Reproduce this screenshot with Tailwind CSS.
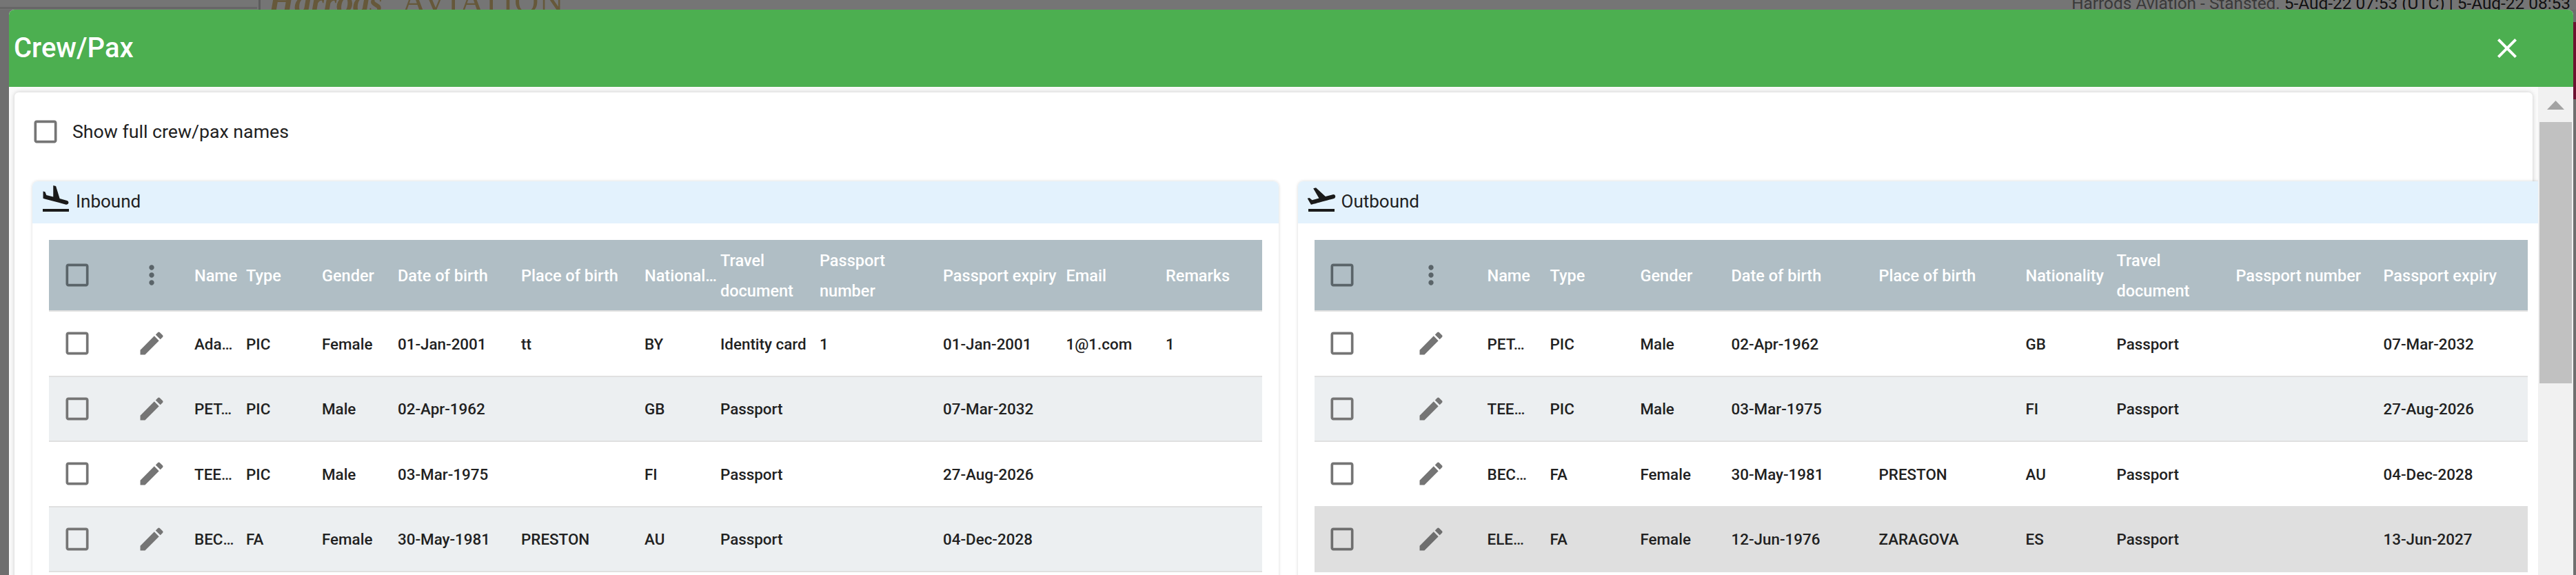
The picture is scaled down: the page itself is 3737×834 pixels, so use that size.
<!DOCTYPE html>
<html lang="en">
<head>
    <meta charset="UTF-8">
    <meta name="viewport" content="width=device-width, initial-scale=1.0">
    <title>Crew/Pax</title>
    <script src="https://cdn.jsdelivr.net/npm/@tailwindcss/browser@4"></script>
</head>
<body class="relative h-[834px] w-[3737px] overflow-hidden bg-[#6e6e6e] font-['Roboto',sans-serif] text-[#212121]">

    <!-- Icons -->
    <svg class="hidden">
        <symbol id="ic-check" viewBox="0 0 24 24"><path d="M19 5v14H5V5h14m0-2H5c-1.1 0-2 .9-2 2v14c0 1.1.9 2 2 2h14c1.1 0 2-.9 2-2V5c0-1.1-.9-2-2-2z"/></symbol>
        <symbol id="ic-edit" viewBox="0 0 24 24"><path d="M3 17.25V21h3.75L17.81 9.94l-3.75-3.75L3 17.25zM20.71 7.04c.39-.39.39-1.02 0-1.41l-2.34-2.34c-.39-.39-1.02-.39-1.41 0l-1.83 1.83 3.75 3.75 1.83-1.83z"/></symbol>
        <symbol id="ic-more" viewBox="0 0 24 24"><path d="M12 8c1.1 0 2-.9 2-2s-.9-2-2-2-2 .9-2 2 .9 2 2 2zm0 2c-1.1 0-2 .9-2 2s.9 2 2 2 2-.9 2-2-.9-2-2-2zm0 6c-1.1 0-2 .9-2 2s.9 2 2 2 2-.9 2-2-.9-2-2-2z"/></symbol>
    </svg>

    <!-- Page behind the dialog -->
    <div class="absolute inset-x-0 top-0 h-[14px] overflow-hidden bg-[#757575]">
        <div class="absolute left-0 top-[10px] h-[3px] w-[373px] bg-[#666666]"></div>
        <div class="absolute left-[375px] top-0 h-[14px] w-[3px] bg-[#5c5c5c]"></div>
        <div class="absolute left-[389px] top-[-28px] whitespace-nowrap font-['Liberation_Serif',serif] text-[50px] italic font-bold leading-[60px] tracking-[-1px] text-[#66583a]">Harrods</div>
        <div class="absolute left-[583px] top-[-28px] whitespace-nowrap font-['Liberation_Serif',serif] text-[49px] leading-[60px] tracking-[1px] text-[#66583a]">AVIATION</div>
        <div class="absolute right-[8px] top-[-10px] whitespace-nowrap text-[24.4px] leading-[30px] text-[#111111]"><span class="text-[#3a3a3a]">Harrods Aviation - Stansted.</span> 5-Aug-22 07:53 (UTC) | 5-Aug-22 08:53</div>
    </div>
    <div class="absolute right-0 top-[32px] h-[112px] w-[4px] bg-[#6d1231]"></div>
    <div class="absolute right-0 top-[144px] h-[690px] w-[4px] bg-[#6f6f6f]"></div>

    <!-- Dialog -->
    <div class="absolute left-[13px] top-[14px] flex h-[820px] w-[3720px] flex-col overflow-hidden rounded-t-lg bg-[#fafafa]">
        <div class="flex h-[112px] shrink-0 items-center justify-between bg-[#4caf50] pl-[7px] pr-[72px] text-white">
            <h2 class="text-[40px] font-medium leading-none">Crew/Pax</h2>
            <svg class="h-12 w-12 fill-white" viewBox="0 0 24 24"><path d="M19 6.41L17.59 5 12 10.59 6.41 5 5 6.41 10.59 12 5 17.59 6.41 19 12 13.41 17.59 19 19 17.59 13.41 12z"/></svg>
        </div>

        <div class="flex min-h-0 flex-1">
            <!-- Scrolling content -->
            <div class="min-w-0 flex-1 overflow-hidden pl-2 pt-2">
                <div class="h-[800px] w-[3653px] rounded-md bg-white pl-[26px] pt-[34.5px] shadow-[0_0_6px_rgba(0,0,0,0.2)]">
                    <label class="ml-[-3.5px] flex items-center gap-[17.5px] text-[26.7px] leading-[44px]">
                        <svg class="h-11 w-11 fill-[#757575]"><use href="#ic-check"/></svg>
                        <span>Show full crew/pax names</span>
                    </label>

                    <div class="mt-[50.5px] flex gap-[27.5px]">
                        <!-- Inbound -->
                        <section class="w-[1808px] shrink-0 rounded-t-lg bg-white shadow-[0_0_4px_rgba(0,0,0,0.16)]">
                            <div class="flex h-[61px] gap-[5px] overflow-hidden rounded-t-lg bg-[#e3f2fd] pl-[10px] pt-[2px] text-[26px]">
                                <svg class="h-12 w-12 fill-[#1a1a1a]" viewBox="0 0 24 24"><path d="M2.5 19h19v2h-19zm7.18-5.73l4.35 1.16 5.31 1.42c.8.21 1.62-.26 1.84-1.06.21-.8-.26-1.62-1.06-1.84l-5.31-1.42-2.76-9.02L10.12 2v8.28L5.15 8.95l-.93-2.32-1.45-.39v5.17l1.6.43 5.31 1.43z"/></svg>
                                <span class="leading-[54px]">Inbound</span>
                            </div>
                            <div class="p-6">
                                <table class="w-[1760px] table-fixed text-left text-[22.4px] font-medium">
                                    <colgroup>
                                        <col class="w-[81px]"><col class="w-[130px]"><col class="w-[75px]"><col class="w-[110px]"><col class="w-[110px]"><col class="w-[179px]"><col class="w-[179px]"><col class="w-[110px]"><col class="w-[144px]"><col class="w-[179px]"><col class="w-[178.5px]"><col class="w-[144.5px]"><col class="w-[140px]">
                                    </colgroup>
                                    <thead class="text-[23.5px]">
                                        <tr class="h-[103px] border-b-2 border-[#e0e0e0] bg-[#b0bec5] text-white">
                                            <th class="font-medium"><svg class="mx-auto block h-11 w-11 fill-[#5a6469]"><use href="#ic-check"/></svg></th>
                                            <th class="pl-[46px] font-medium"><svg class="block h-11 w-11 fill-[#5a6469]"><use href="#ic-more"/></svg></th>
                                            <th class="pt-[3px] font-medium">Name</th>
                                            <th class="pt-[3px] font-medium">Type</th>
                                            <th class="pt-[3px] font-medium">Gender</th>
                                            <th class="pt-[3px] font-medium">Date of birth</th>
                                            <th class="pt-[3px] font-medium">Place of birth</th>
                                            <th class="whitespace-nowrap pt-[3px] font-medium">National…</th>
                                            <th class="pt-[1px] font-medium leading-[44px]">Travel<br>document</th>
                                            <th class="pt-[1px] font-medium leading-[44px]">Passport<br>number</th>
                                            <th class="pt-[3px] font-medium">Passport expiry</th>
                                            <th class="pt-[3px] font-medium">Email</th>
                                            <th class="pt-[3px] font-medium">Remarks</th>
                                        </tr>
                                    </thead>
                                    <tbody>
                                        <tr class="h-[94.5px] border-b-2 border-[#e0e0e0] bg-white">
                                            <td><svg class="mx-auto block h-11 w-11 fill-[#757575]"><use href="#ic-check"/></svg></td>
                                            <td class="pl-[46px]"><svg class="block h-11 w-11 fill-[#757575]"><use href="#ic-edit"/></svg></td>
                                            <td class="pt-[3px]">Ada…</td><td class="pt-[3px]">PIC</td><td class="pt-[3px]">Female</td><td class="pt-[3px]">01-Jan-2001</td><td class="pt-[3px]">tt</td><td class="pt-[3px]">BY</td><td class="pt-[3px]">Identity card</td><td class="pt-[3px]">1</td><td class="pt-[3px]">01-Jan-2001</td><td class="pt-[3px]">1@1.com</td><td class="pt-[3px]">1</td>
                                        </tr>
                                        <tr class="h-[94.5px] border-b-2 border-[#e0e0e0] bg-[#eceff1]">
                                            <td><svg class="mx-auto block h-11 w-11 fill-[#757575]"><use href="#ic-check"/></svg></td>
                                            <td class="pl-[46px]"><svg class="block h-11 w-11 fill-[#757575]"><use href="#ic-edit"/></svg></td>
                                            <td class="pt-[3px]">PET…</td><td class="pt-[3px]">PIC</td><td class="pt-[3px]">Male</td><td class="pt-[3px]">02-Apr-1962</td><td class="pt-[3px]"></td><td class="pt-[3px]">GB</td><td class="pt-[3px]">Passport</td><td class="pt-[3px]"></td><td class="pt-[3px]">07-Mar-2032</td><td></td><td></td>
                                        </tr>
                                        <tr class="h-[94.5px] border-b-2 border-[#e0e0e0] bg-white">
                                            <td><svg class="mx-auto block h-11 w-11 fill-[#757575]"><use href="#ic-check"/></svg></td>
                                            <td class="pl-[46px]"><svg class="block h-11 w-11 fill-[#757575]"><use href="#ic-edit"/></svg></td>
                                            <td class="pt-[3px]">TEE…</td><td class="pt-[3px]">PIC</td><td class="pt-[3px]">Male</td><td class="pt-[3px]">03-Mar-1975</td><td class="pt-[3px]"></td><td class="pt-[3px]">FI</td><td class="pt-[3px]">Passport</td><td class="pt-[3px]"></td><td class="pt-[3px]">27-Aug-2026</td><td></td><td></td>
                                        </tr>
                                        <tr class="h-[94.5px] border-b-2 border-[#e0e0e0] bg-[#eceff1]">
                                            <td><svg class="mx-auto block h-11 w-11 fill-[#757575]"><use href="#ic-check"/></svg></td>
                                            <td class="pl-[46px]"><svg class="block h-11 w-11 fill-[#757575]"><use href="#ic-edit"/></svg></td>
                                            <td class="pt-[3px]">BEC…</td><td class="pt-[3px]">FA</td><td class="pt-[3px]">Female</td><td class="pt-[3px]">30-May-1981</td><td class="pt-[3px]">PRESTON</td><td class="pt-[3px]">AU</td><td class="pt-[3px]">Passport</td><td class="pt-[3px]"></td><td class="pt-[3px]">04-Dec-2028</td><td></td><td></td>
                                        </tr>
                                    </tbody>
                                </table>
                            </div>
                        </section>

                        <!-- Outbound -->
                        <section class="w-[1808px] shrink-0 rounded-t-lg bg-white shadow-[0_0_4px_rgba(0,0,0,0.16)]">
                            <div class="flex h-[61px] gap-[5px] overflow-hidden rounded-t-lg bg-[#e3f2fd] pl-[10px] pt-[2px] text-[26px]">
                                <svg class="h-12 w-12 fill-[#1a1a1a]" viewBox="0 0 24 24"><path d="M2.5 19h19v2h-19zm19.57-9.36c-.21-.8-1.04-1.28-1.84-1.06L14.92 10l-6.9-6.43-1.93.51 4.14 7.17-4.97 1.33-1.97-1.54-1.45.39 2.59 4.49s7.12-1.9 16.57-4.43c.81-.23 1.28-1.05 1.07-1.85z"/></svg>
                                <span class="leading-[54px]">Outbound</span>
                            </div>
                            <div class="p-6">
                                <table class="w-[1760px] table-fixed text-left text-[22.4px] font-medium">
                                    <colgroup>
                                        <col class="w-[81px]"><col class="w-[170px]"><col class="w-[91px]"><col class="w-[131px]"><col class="w-[132px]"><col class="w-[214px]"><col class="w-[213px]"><col class="w-[132px]"><col class="w-[173px]"><col class="w-[214px]"><col class="w-[209px]">
                                    </colgroup>
                                    <thead class="text-[23.5px]">
                                        <tr class="h-[103px] border-b-2 border-[#e0e0e0] bg-[#b0bec5] text-white">
                                            <th class="font-medium"><svg class="mx-auto block h-11 w-11 fill-[#5a6469]"><use href="#ic-check"/></svg></th>
                                            <th class="pl-[66px] font-medium"><svg class="block h-11 w-11 fill-[#5a6469]"><use href="#ic-more"/></svg></th>
                                            <th class="pt-[3px] font-medium">Name</th>
                                            <th class="pt-[3px] font-medium">Type</th>
                                            <th class="pt-[3px] font-medium">Gender</th>
                                            <th class="pt-[3px] font-medium">Date of birth</th>
                                            <th class="pt-[3px] font-medium">Place of birth</th>
                                            <th class="pt-[3px] font-medium">Nationality</th>
                                            <th class="pt-[1px] font-medium leading-[44px]">Travel<br>document</th>
                                            <th class="pt-[3px] font-medium">Passport number</th>
                                            <th class="pt-[3px] font-medium">Passport expiry</th>
                                        </tr>
                                    </thead>
                                    <tbody>
                                        <tr class="h-[94.5px] border-b-2 border-[#e0e0e0] bg-white">
                                            <td><svg class="mx-auto block h-11 w-11 fill-[#757575]"><use href="#ic-check"/></svg></td>
                                            <td class="pl-[66px]"><svg class="block h-11 w-11 fill-[#757575]"><use href="#ic-edit"/></svg></td>
                                            <td class="pt-[3px]">PET…</td><td class="pt-[3px]">PIC</td><td class="pt-[3px]">Male</td><td class="pt-[3px]">02-Apr-1962</td><td class="pt-[3px]"></td><td class="pt-[3px]">GB</td><td class="pt-[3px]">Passport</td><td></td><td class="pt-[3px]">07-Mar-2032</td>
                                        </tr>
                                        <tr class="h-[94.5px] border-b-2 border-[#e0e0e0] bg-[#eceff1]">
                                            <td><svg class="mx-auto block h-11 w-11 fill-[#757575]"><use href="#ic-check"/></svg></td>
                                            <td class="pl-[66px]"><svg class="block h-11 w-11 fill-[#757575]"><use href="#ic-edit"/></svg></td>
                                            <td class="pt-[3px]">TEE…</td><td class="pt-[3px]">PIC</td><td class="pt-[3px]">Male</td><td class="pt-[3px]">03-Mar-1975</td><td class="pt-[3px]"></td><td class="pt-[3px]">FI</td><td class="pt-[3px]">Passport</td><td></td><td class="pt-[3px]">27-Aug-2026</td>
                                        </tr>
                                        <tr class="h-[94.5px] border-b-2 border-[#e0e0e0] bg-white">
                                            <td><svg class="mx-auto block h-11 w-11 fill-[#757575]"><use href="#ic-check"/></svg></td>
                                            <td class="pl-[66px]"><svg class="block h-11 w-11 fill-[#757575]"><use href="#ic-edit"/></svg></td>
                                            <td class="pt-[3px]">BEC…</td><td class="pt-[3px]">FA</td><td class="pt-[3px]">Female</td><td class="pt-[3px]">30-May-1981</td><td class="pt-[3px]">PRESTON</td><td class="pt-[3px]">AU</td><td class="pt-[3px]">Passport</td><td></td><td class="pt-[3px]">04-Dec-2028</td>
                                        </tr>
                                        <tr class="h-[94.5px] border-b-2 border-[#dfdfdf] bg-[#dfdfdf]">
                                            <td><svg class="mx-auto block h-11 w-11 fill-[#6e6e6e]"><use href="#ic-check"/></svg></td>
                                            <td class="pl-[66px]"><svg class="block h-11 w-11 fill-[#6e6e6e]"><use href="#ic-edit"/></svg></td>
                                            <td class="pt-[3px]">ELE…</td><td class="pt-[3px]">FA</td><td class="pt-[3px]">Female</td><td class="pt-[3px]">12-Jun-1976</td><td class="pt-[3px]">ZARAGOVA</td><td class="pt-[3px]">ES</td><td class="pt-[3px]">Passport</td><td></td><td class="pt-[3px]">13-Jun-2027</td>
                                        </tr>
                                    </tbody>
                                </table>
                            </div>
                        </section>
                    </div>
                </div>
            </div>

            <!-- Scrollbar -->
            <div class="flex w-[51px] shrink-0 flex-col items-center bg-[#f1f1f1]">
                <svg class="mt-[20px] h-[13px] w-[25px] fill-[#a3a3a3]" viewBox="0 0 25 13"><path d="M12.5 0L25 13H0z"/></svg>
                <div class="mt-[18px] h-[379px] w-[47px] bg-[#c1c1c1]"></div>
            </div>
        </div>
    </div>
</body>
</html>
